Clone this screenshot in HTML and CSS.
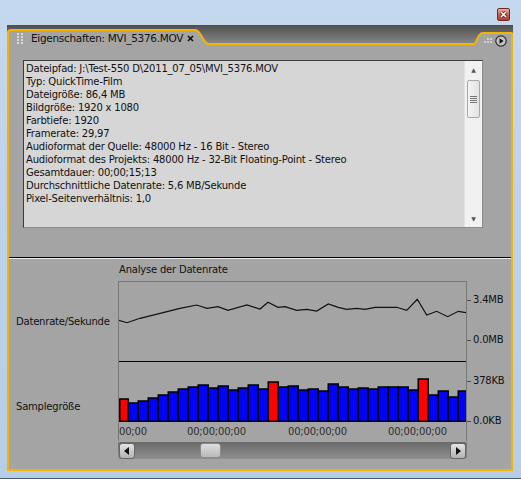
FILE: index.html
```html
<!DOCTYPE html>
<html lang="de">
<head>
  <meta charset="UTF-8" />
  <title>Eigenschaften: MVI_5376.MOV</title>
  <link rel="stylesheet" href="styles.css">
</head>
<body>
  <div class="titlebar">
    <span class="win-close">
      <svg width="11" height="11" viewBox="0 0 11 11"><path d="M3 3 L8 8 M8 3 L3 8" stroke="#5a1a12" stroke-width="3"/><path d="M3 3 L8 8 M8 3 L3 8" stroke="#fff" stroke-width="1.6"/></svg>
    </span>
  </div>

  <div class="panel">
    <div class="panel-head">
      <div class="tab">
        <svg class="grip" width="6" height="11" viewBox="0 0 6 11">
          <g fill="#d8d8d8"><rect x="0" y="0" width="2" height="2"/><rect x="4" y="0" width="2" height="2"/><rect x="0" y="3" width="2" height="2"/><rect x="4" y="3" width="2" height="2"/><rect x="0" y="6" width="2" height="2"/><rect x="4" y="6" width="2" height="2"/><rect x="0" y="9" width="2" height="2"/><rect x="4" y="9" width="2" height="2"/></g>
        </svg>
        <span class="tab-title">Eigenschaften: MVI_5376.MOV</span>
        <svg class="tab-x" width="7" height="7" viewBox="0 0 7 7"><path d="M1 1 L6 6 M6 1 L1 6" stroke="#111" stroke-width="1.6"/></svg>
      </div>
      <svg class="tab-ear" width="14" height="16" viewBox="0 0 14 16">
        <path d="M0 0 C7 0 7 15 14 15 L14 16 L0 16 Z" fill="#a4a4a4"/>
        <path d="M0 1 C7 1 7 15 14 15" fill="none" stroke="#f5b400" stroke-width="2"/>
      </svg>
      <div class="head-line"></div>
      <svg class="menu-ear" width="9" height="13" viewBox="0 0 9 13">
        <path d="M9 0 C3 0 3 12 0 12 L0 13 L9 13 Z" fill="#a4a4a4"/>
        <path d="M9 1 C3 1 3 12 0 12" fill="none" stroke="#f5b400" stroke-width="2"/>
      </svg>
      <div class="menu-tab">
        <svg width="8" height="6" viewBox="0 0 8 6"><g fill="#d0d0d0"><rect x="0" y="4" width="2" height="2"/><rect x="3" y="4" width="2" height="2"/><rect x="3" y="1" width="2" height="2"/><rect x="6" y="1" width="2" height="2"/><rect x="6" y="4" width="2" height="2"/></g></svg>
        <svg class="menu-btn" width="12" height="12" viewBox="0 0 12 12">
          <circle cx="6" cy="6" r="5.2" fill="#c4c4c4" stroke="#2a2a2a" stroke-width="1.2"/>
          <path d="M4.5 3.2 L8.6 6 L4.5 8.8 Z" fill="#111"/>
        </svg>
      </div>
    </div>

    <div class="panel-body">
      <div class="info">
        <div class="info-text">
          <div>Dateipfad: J:\Test-550 D\2011_07_05\MVI_5376.MOV</div>
          <div>Typ: QuickTime-Film</div>
          <div>Dateigröße: 86,4 MB</div>
          <div>Bildgröße: 1920 x 1080</div>
          <div>Farbtiefe: 1920</div>
          <div>Framerate: 29,97</div>
          <div>Audioformat der Quelle: 48000 Hz - 16 Bit - Stereo</div>
          <div>Audioformat des Projekts: 48000 Hz - 32-Bit Floating-Point - Stereo</div>
          <div>Gesamtdauer: 00;00;15;13</div>
          <div>Durchschnittliche Datenrate: 5,6 MB/Sekunde</div>
          <div>Pixel-Seitenverhältnis: 1,0</div>
        </div>
        <div class="vscroll">
          <span class="arrow">&#9650;</span>
          <div class="vthumb"><span></span><span></span><span></span><span></span></div>
          <span class="arrow down">&#9660;</span>
        </div>
      </div>

      <div class="divider"></div>

      <div class="analysis">
        <div class="chart-title">Analyse der Datenrate</div>

        <div class="row-label rate-label">Datenrate/Sekunde</div>
        <div class="row-label size-label">Samplegröße</div>

        <div class="plot">
          <svg class="rate" width="347" height="79" viewBox="0 0 347 79">
            <polyline fill="none" stroke="#111" stroke-width="1.2" points="-1,38 8,40.7 21,36.3 41,31.3 61,26.3 77.7,23 88,26.3 99,24.7 109,28.3 128,23 141,27 149,20.3 159,25.3 166,24.7 177.7,28.3 187.7,27.3 197.7,29 209.3,22 219.3,25.3 227.7,27.3 237.7,26.3 246,27.3 256,25.3 277.7,25.3 287.7,28.3 298.3,17.3 307.7,33 317.7,29.3 328.7,34.7 339.3,29.3 347,30.7"/>
          </svg>
          <svg class="sizes" width="347" height="61" viewBox="0 0 347 61">
            <line x1="0" y1="0.5" x2="347" y2="0.5" stroke="#000"/>
            <g stroke="#000" stroke-width="1.5">
              <rect x="0.75" y="38" width="8.5" height="22.25" fill="#ff0000"/>
              <rect x="9.25" y="42" width="10" height="18.25" fill="#0000ff"/>
              <rect x="19.25" y="40" width="10" height="20.25" fill="#0000ff"/>
              <rect x="29.25" y="37" width="10" height="23.25" fill="#0000ff"/>
              <rect x="39.25" y="34" width="10" height="26.25" fill="#0000ff"/>
              <rect x="49.25" y="31" width="10" height="29.25" fill="#0000ff"/>
              <rect x="59.25" y="28" width="10" height="32.25" fill="#0000ff"/>
              <rect x="69.25" y="26" width="10" height="34.25" fill="#0000ff"/>
              <rect x="79.25" y="24" width="10" height="36.25" fill="#0000ff"/>
              <rect x="89.25" y="27" width="10" height="33.25" fill="#0000ff"/>
              <rect x="99.25" y="25" width="10" height="35.25" fill="#0000ff"/>
              <rect x="109.25" y="29" width="10" height="31.25" fill="#0000ff"/>
              <rect x="119.25" y="27" width="10" height="33.25" fill="#0000ff"/>
              <rect x="129.25" y="24" width="10" height="36.25" fill="#0000ff"/>
              <rect x="139.25" y="28" width="10" height="32.25" fill="#0000ff"/>
              <rect x="149.25" y="21" width="10" height="39.25" fill="#ff0000"/>
              <rect x="159.25" y="26" width="10" height="34.25" fill="#0000ff"/>
              <rect x="169.25" y="25" width="10" height="35.25" fill="#0000ff"/>
              <rect x="179.25" y="29" width="10" height="31.25" fill="#0000ff"/>
              <rect x="189.25" y="28" width="10" height="32.25" fill="#0000ff"/>
              <rect x="199.25" y="30" width="10" height="30.25" fill="#0000ff"/>
              <rect x="209.25" y="23" width="10" height="37.25" fill="#0000ff"/>
              <rect x="219.25" y="26" width="10" height="34.25" fill="#0000ff"/>
              <rect x="229.25" y="28" width="10" height="32.25" fill="#0000ff"/>
              <rect x="239.25" y="27" width="10" height="33.25" fill="#0000ff"/>
              <rect x="249.25" y="28" width="10" height="32.25" fill="#0000ff"/>
              <rect x="259.25" y="26" width="10" height="34.25" fill="#0000ff"/>
              <rect x="269.25" y="26" width="10" height="34.25" fill="#0000ff"/>
              <rect x="279.25" y="26" width="10" height="34.25" fill="#0000ff"/>
              <rect x="289.25" y="29" width="10" height="31.25" fill="#0000ff"/>
              <rect x="299.25" y="18" width="10" height="42.25" fill="#ff0000"/>
              <rect x="309.25" y="34" width="10" height="26.25" fill="#0000ff"/>
              <rect x="319.25" y="30" width="10" height="30.25" fill="#0000ff"/>
              <rect x="329.25" y="36" width="10" height="24.25" fill="#0000ff"/>
              <rect x="339.25" y="30" width="10" height="30.25" fill="#0000ff"/>
            </g>
          </svg>
          <div class="times">
            <span>00;00</span>
            <span>00;00;00;00</span>
            <span>00;00;00;00</span>
            <span>00;00;00;00</span>
          </div>
        </div>

        <div class="axis rate-axis">
          <span class="tick">3.4MB</span>
          <span class="tick">0.0MB</span>
        </div>
        <div class="axis size-axis">
          <span class="tick">378KB</span>
          <span class="tick">0.0KB</span>
        </div>

        <div class="hscroll">
          <span class="hbtn"><svg width="6" height="8" viewBox="0 0 6 8"><path d="M5 0 L0 4 L5 8 Z" fill="#111"/></svg></span>
          <span class="hthumb"></span>
          <span class="hbtn right"><svg width="6" height="8" viewBox="0 0 6 8"><path d="M1 0 L6 4 L1 8 Z" fill="#111"/></svg></span>
        </div>
      </div>
    </div>
  </div>
</body>
</html>
```

FILE: styles.css
```css
body {
  margin: 0;
  width: 521px;
  height: 479px;
  overflow: hidden;
  background: linear-gradient(#c4d8ee, #b6cde8);
  font-family: "DejaVu Sans", sans-serif;
  font-size: 10px;
  letter-spacing: -0.2px;
  color: #111;
  border-bottom: 1px solid #3e6470;
  box-sizing: border-box;
}

.titlebar {
  height: 25px;
  display: flex;
  justify-content: flex-end;
  align-items: flex-start;
  padding: 8px 11px 0 0;
  box-sizing: border-box;
}
.win-close {
  width: 13px;
  height: 13px;
  box-sizing: border-box;
  border: 1px solid #6e2a22;
  border-radius: 2px;
  background: linear-gradient(#eab0a6, #c9574a 55%, #b84030);
  display: flex;
  align-items: center;
  justify-content: center;
}

.panel {
  margin-left: 7px;
  width: 506px;
}
.panel-head {
  height: 20px;
  display: flex;
  align-items: flex-end;
  background: linear-gradient(#4e4e4e, #8c8c8c);
}
.tab {
  width: 186px;
  height: 14px;
  border-top: 2px solid #f5b400;
  border-left: 2px solid #f5b400;
  border-top-left-radius: 4px;
  background: #a4a4a4;
  display: flex;
  align-items: center;
  flex-shrink: 0;
}
.grip {
  margin-left: 8px;
  flex-shrink: 0;
}
.tab-title {
  margin-left: 8px;
  font-size: 10.5px;
  letter-spacing: -0.3px;
  white-space: nowrap;
  color: #111;
}
.tab-x {
  margin-left: auto;
  margin-right: 1px;
  flex-shrink: 0;
}
.tab-ear, .menu-ear {
  display: block;
  flex-shrink: 0;
}
.head-line {
  flex: 1;
  height: 2px;
  background: #f5b400;
}
.menu-tab {
  width: 27px;
  height: 11px;
  border-top: 2px solid #f5b400;
  border-right: 2px solid #f5b400;
  border-top-right-radius: 2px;
  background: #a4a4a4;
  display: flex;
  align-items: center;
  gap: 3px;
  padding-left: 1px;
  flex-shrink: 0;
}
.menu-btn {
  margin-top: 2px;
}

.panel-body {
  display: flow-root;
  background: #a4a4a4;
  border: 2px solid #f5b400;
  border-top: 0;
  height: 424px;
}

.info {
  margin: 15px 28px 0 14px;
  height: 168px;
  box-sizing: border-box;
  display: flex;
  background: #d6d6d6;
  border: 1px solid #8a8a8a;
  border-top-color: #3c3c3c;
  border-left-color: #3c3c3c;
}
.info-text {
  flex: 1;
  padding: 1px 2px;
  line-height: 13px;
  white-space: nowrap;
}
.vscroll {
  width: 17px;
  background: #f1f1f1;
  border-left: 1px solid #e2e2e2;
  display: flex;
  flex-direction: column;
  align-items: center;
}
.arrow {
  font-size: 6px;
  color: #555;
  height: 17px;
  line-height: 17px;
}
.arrow.down {
  margin-top: auto;
}
.vthumb {
  width: 13px;
  height: 38px;
  margin-top: 2px;
  box-sizing: border-box;
  border: 1px solid #a9a9a9;
  border-radius: 2px;
  background: linear-gradient(90deg, #f4f4f4, #e2e2e2);
  display: flex;
  flex-direction: column;
  align-items: center;
  justify-content: center;
  gap: 1px;
}
.vthumb span {
  width: 7px;
  height: 1px;
  background: #777;
}

.divider {
  margin-top: 29px;
  border-top: 1px solid #000;
  border-bottom: 1px solid #ececec;
}

.analysis {
  display: grid;
  grid-template-columns: 109px 349px 44px;
  grid-template-rows: 22px 80px 61px 19px 18px;
}
.chart-title {
  grid-column: 2;
  grid-row: 1;
  line-height: 22px;
  padding-left: 1px;
}
.row-label {
  grid-column: 1;
  padding-left: 7px;
}
.rate-label {
  grid-row: 2;
  display: flex;
  align-items: center;
  padding-top: 1px;
}
.size-label {
  grid-row: 3;
  padding-top: 40px;
  line-height: 12px;
}
.plot {
  grid-column: 2;
  grid-row: 2 / 5;
  border: 1px solid #787878;
  border-bottom: 0;
}
.plot svg {
  display: block;
}
.times {
  display: grid;
  grid-template-columns: 68px 101px 100px auto;
  height: 19px;
  line-height: 19px;
  color: #2e2e2e;
}
.axis {
  grid-column: 3;
  display: flex;
  flex-direction: column;
  line-height: 12px;
}
.rate-axis {
  grid-row: 2;
  padding-top: 13px;
  gap: 28px;
}
.size-axis {
  grid-row: 3;
  padding-top: 14px;
  gap: 28px;
}
.tick {
  display: flex;
  align-items: center;
}
.tick::before {
  content: "";
  width: 4px;
  height: 1px;
  background: #4a4a4a;
  margin-right: 2px;
}

.hscroll {
  grid-column: 2;
  grid-row: 5;
  margin-top: 1px;
  display: flex;
  align-items: center;
  padding: 0 1px;
  border-radius: 2px;
  background: linear-gradient(#6a6a6a, #8f8f8f);
}
.hbtn {
  width: 16px;
  height: 16px;
  box-sizing: border-box;
  border: 1px solid #666;
  border-radius: 3px;
  background: linear-gradient(#e4e4e4, #b2b2b2);
  display: flex;
  align-items: center;
  justify-content: center;
}
.hbtn.right {
  margin-left: auto;
}
.hthumb {
  margin-left: 65px;
  width: 21px;
  height: 15px;
  border-radius: 3px;
  border: 1px solid #8a8a8a;
  box-sizing: border-box;
  background: linear-gradient(#dedede, #b9b9b9);
}
```
